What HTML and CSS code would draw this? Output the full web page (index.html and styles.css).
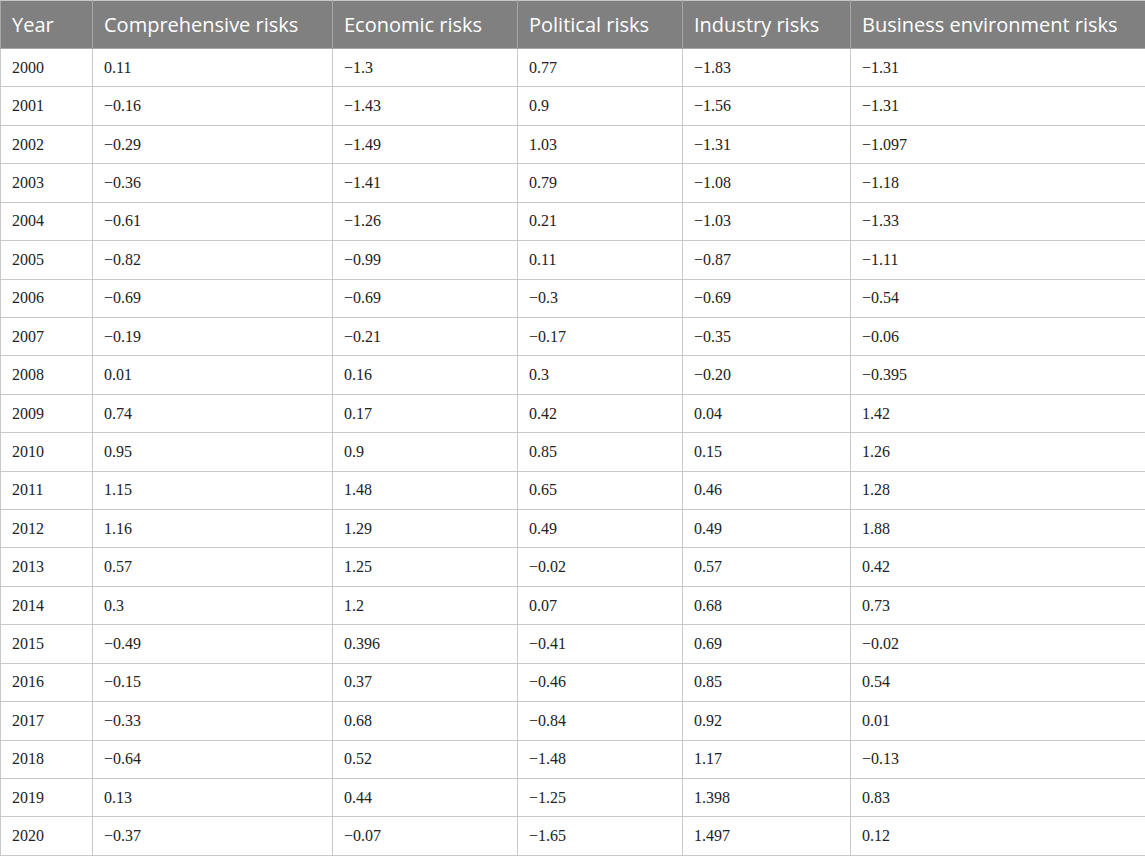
FILE: index.html
```html
<!DOCTYPE html>
<html>
<head>
<meta charset="utf-8">
<link rel="stylesheet" href="styles.css">
</head>
<body>
<table class="data">
<colgroup>
<col class="c1"><col class="c2"><col class="c3"><col class="c4"><col class="c5"><col class="c6">
</colgroup>
<thead>
<tr><th>Year</th><th>Comprehensive risks</th><th>Economic risks</th><th>Political risks</th><th>Industry risks</th><th>Business environment risks</th></tr>
</thead>
<tbody>
<tr><td>2000</td><td>0.11</td><td>−1.3</td><td>0.77</td><td>−1.83</td><td>−1.31</td></tr>
<tr><td>2001</td><td>−0.16</td><td>−1.43</td><td>0.9</td><td>−1.56</td><td>−1.31</td></tr>
<tr><td>2002</td><td>−0.29</td><td>−1.49</td><td>1.03</td><td>−1.31</td><td>−1.097</td></tr>
<tr><td>2003</td><td>−0.36</td><td>−1.41</td><td>0.79</td><td>−1.08</td><td>−1.18</td></tr>
<tr><td>2004</td><td>−0.61</td><td>−1.26</td><td>0.21</td><td>−1.03</td><td>−1.33</td></tr>
<tr><td>2005</td><td>−0.82</td><td>−0.99</td><td>0.11</td><td>−0.87</td><td>−1.11</td></tr>
<tr><td>2006</td><td>−0.69</td><td>−0.69</td><td>−0.3</td><td>−0.69</td><td>−0.54</td></tr>
<tr><td>2007</td><td>−0.19</td><td>−0.21</td><td>−0.17</td><td>−0.35</td><td>−0.06</td></tr>
<tr><td>2008</td><td>0.01</td><td>0.16</td><td>0.3</td><td>−0.20</td><td>−0.395</td></tr>
<tr><td>2009</td><td>0.74</td><td>0.17</td><td>0.42</td><td>0.04</td><td>1.42</td></tr>
<tr><td>2010</td><td>0.95</td><td>0.9</td><td>0.85</td><td>0.15</td><td>1.26</td></tr>
<tr><td>2011</td><td>1.15</td><td>1.48</td><td>0.65</td><td>0.46</td><td>1.28</td></tr>
<tr><td>2012</td><td>1.16</td><td>1.29</td><td>0.49</td><td>0.49</td><td>1.88</td></tr>
<tr><td>2013</td><td>0.57</td><td>1.25</td><td>−0.02</td><td>0.57</td><td>0.42</td></tr>
<tr><td>2014</td><td>0.3</td><td>1.2</td><td>0.07</td><td>0.68</td><td>0.73</td></tr>
<tr><td>2015</td><td>−0.49</td><td>0.396</td><td>−0.41</td><td>0.69</td><td>−0.02</td></tr>
<tr><td>2016</td><td>−0.15</td><td>0.37</td><td>−0.46</td><td>0.85</td><td>0.54</td></tr>
<tr><td>2017</td><td>−0.33</td><td>0.68</td><td>−0.84</td><td>0.92</td><td>0.01</td></tr>
<tr><td>2018</td><td>−0.64</td><td>0.52</td><td>−1.48</td><td>1.17</td><td>−0.13</td></tr>
<tr><td>2019</td><td>0.13</td><td>0.44</td><td>−1.25</td><td>1.398</td><td>0.83</td></tr>
<tr><td>2020</td><td>−0.37</td><td>−0.07</td><td>−1.65</td><td>1.497</td><td>0.12</td></tr>
</tbody>
</table>
</body>
</html>
```
FILE: styles.css
```css
html, body {
  margin: 0;
  padding: 0;
  background: #ffffff;
}
.data {
  width: 1145px;
  border-collapse: collapse;
  table-layout: fixed;
}
.c1 { width: 92px; }
.c2 { width: 240px; }
.c3 { width: 185px; }
.c4 { width: 165px; }
.c5 { width: 168px; }
.c6 { width: 295px; }
.data th {
  background: #808080;
  color: #ffffff;
  font-family: "Open Sans", "Noto Sans", sans-serif;
  font-weight: 400;
  font-size: 20px;
  text-align: left;
  height: 48px;
  padding: 0 11px;
  border: 1px solid #a8a8a8;
  border-top-color: #c8c8c8;
  box-sizing: border-box;
  white-space: nowrap;
}
.data td {
  font-family: "Liberation Serif", "Times New Roman", serif;
  font-size: 16px;
  color: #222222;
  height: 38.43px;
  padding: 0 11px;
  border: 1px solid #c8c8c8;
  box-sizing: border-box;
}
```
